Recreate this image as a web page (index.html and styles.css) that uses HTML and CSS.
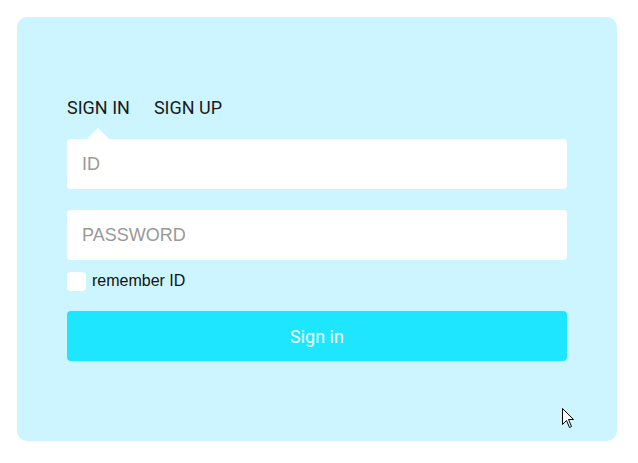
FILE: index.html
```html
<!DOCTYPE html>
<html lang="en">
<head>
<meta charset="utf-8">
<title>Sign in</title>
<link rel="stylesheet" href="styles.css">
</head>
<body>
<div class="card">
  <div class="tabs">
    <span class="tab active">SIGN IN</span>
    <span class="tab">SIGN UP</span>
  </div>
  <form class="form">
    <input class="field" type="text" placeholder="ID">
    <input class="field" type="password" placeholder="PASSWORD">
    <label class="remember"><span class="box"></span>remember ID</label>
    <button class="submit" type="button">Sign in</button>
  </form>
  <svg class="cursor" width="13" height="21" viewBox="0 0 13 21">
    <path d="M0.5 0.5 L0.5 16.5 L4.5 12.5 L7.5 19.5 L9.5 18.5 L6.5 11.5 L11.5 11.5 Z" fill="#fff" stroke="#000" stroke-width="1"/>
  </svg>
</div>
</body>
</html>
```
FILE: styles.css
```css
html, body {
  margin: 0;
  padding: 0;
  background: #fff;
}
body {
  padding: 17px;
}
.card {
  position: relative;
  box-sizing: border-box;
  width: 600px;
  height: 424px;
  background: #ccf5ff;
  border-radius: 10px;
  padding: 82px 50px 0 50px;
}
.tabs {
  display: flex;
  align-items: flex-start;
  gap: 24px;
}
.tab {
  position: relative;
  box-sizing: border-box;
  height: 40px;
  font-family: Roboto, sans-serif;
  font-size: 18px;
  line-height: 18px;
  color: #1a1a1a;
}
.tab.active::after {
  content: "";
  position: absolute;
  left: 50%;
  bottom: 0;
  margin-left: -11px;
  border-left: 11px solid transparent;
  border-right: 11px solid transparent;
  border-bottom: 11px solid #fff;
}
.form {
  display: flex;
  flex-direction: column;
}
.field {
  box-sizing: border-box;
  width: 500px;
  height: 50px;
  border: none;
  border-radius: 4px;
  background: #fff;
  padding: 0 15px;
  font-family: "Liberation Sans", Arial, sans-serif;
  font-size: 18px;
  color: #333;
  outline: none;
  margin: 0 0 21px 0;
}
.field:nth-of-type(2) {
  margin-bottom: 11px;
}
.field::placeholder {
  color: #999;
}
.remember {
  display: flex;
  align-items: center;
  gap: 6px;
  font-family: "Liberation Sans", Arial, sans-serif;
  font-size: 16px;
  color: #111;
  height: 20px;
  margin-bottom: 20px;
}
.box {
  width: 19px;
  height: 19px;
  background: #fff;
  border-radius: 4px;
}
.submit {
  width: 500px;
  height: 50px;
  border: none;
  border-radius: 4px;
  background: #1ee6ff;
  color: #fff;
  font-family: Roboto, sans-serif;
  font-size: 18px;
  padding: 0;
}
.cursor {
  position: absolute;
  left: 545px;
  top: 391px;
}
```
